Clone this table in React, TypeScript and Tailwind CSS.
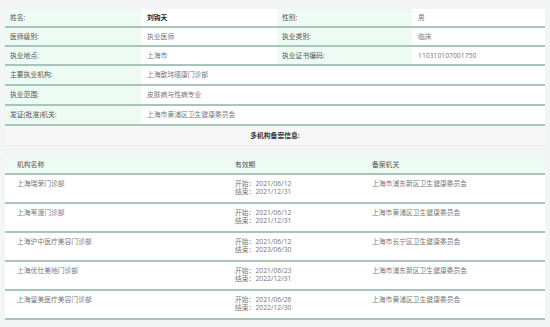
import React from "react";

const basic = [
  [
    { label: "姓名:", value: "刘钩天", bold: true },
    { label: "性别:", value: "男" },
  ],
  [
    { label: "医师级别:", value: "执业医师" },
    { label: "执业类别:", value: "临床" },
  ],
  [
    { label: "执业地点:", value: "上海市" },
    { label: "执业证书编码:", value: "110310107001750" },
  ],
];

const wide = [
  { label: "主要执业机构:", value: "上海歆玮德康门诊部" },
  { label: "执业范围:", value: "皮肤病与性病专业" },
  { label: "发证(批准)机关:", value: "上海市黄浦区卫生健康委员会" },
];

const orgs = [
  { name: "上海瑞荣门诊部", start: "2021/06/12", end: "2021/12/31", org: "上海市浦东新区卫生健康委员会" },
  { name: "上海苇渡门诊部", start: "2021/06/12", end: "2021/12/31", org: "上海市黄浦区卫生健康委员会" },
  { name: "上海沪中医疗美容门诊部", start: "2021/06/12", end: "2023/06/30", org: "上海市长宁区卫生健康委员会" },
  { name: "上海优仕美地门诊部", start: "2021/06/23", end: "2022/12/31", org: "上海市浦东新区卫生健康委员会" },
  { name: "上海留美医疗美容门诊部", start: "2021/06/26", end: "2022/12/30", org: "上海市黄浦区卫生健康委员会" },
];

const font = "font-['Open_Sans','Noto_Sans_CJK_SC',sans-serif]";

export default function App() {
  return (
    <div className={`h-[327px] w-[550px] overflow-hidden bg-[#f3f4f4] px-[5px] pt-[9px] text-[6.8px] leading-[8px] ${font}`}>
      {/* basic info */}
      <div className="flex flex-col">
        {basic.map((row, i) => (
          <div
            key={i}
            className="grid h-[19px] grid-cols-[136px_136px_135px_1fr] border-b-2 border-[#a9c5ba]"
          >
            {row.map((cell) => (
              <React.Fragment key={cell.label}>
                <div className="flex items-center bg-[#eefaf4] px-[5px] text-[#555]">{cell.label}</div>
                <div
                  className={`flex items-center bg-white px-[6px] ${
                    cell.bold ? "font-bold text-[#222]" : "text-[#777]"
                  }`}
                >
                  {cell.value}
                </div>
              </React.Fragment>
            ))}
          </div>
        ))}
        {wide.map((row) => (
          <div
            key={row.label}
            className="grid h-[20px] grid-cols-[136px_1fr] border-b-2 border-[#a9c5ba]"
          >
            <div className="flex items-center bg-[#eefaf4] px-[5px] text-[#555]">{row.label}</div>
            <div className="flex items-center bg-white px-[6px] text-[#777]">{row.value}</div>
          </div>
        ))}
      </div>

      {/* section title */}
      <div className="flex h-[20px] items-center justify-center border-b border-[#ececec] bg-[#f7f7f7] font-bold text-[#333]">
        多机构备案信息:
      </div>

      {/* org table */}
      <div className="mt-[10px] flex flex-col">
        <div className="grid h-[19px] grid-cols-[218px_137px_1fr] border-b-2 border-[#a9c5ba] bg-[#eefaf4] text-[#555]">
          <div className="flex items-center px-3">机构名称</div>
          <div className="flex items-center px-3">有效期</div>
          <div className="flex items-center px-3">备案机关</div>
        </div>
        {orgs.map((o) => (
          <div
            key={o.name}
            className="grid h-[29px] grid-cols-[218px_137px_1fr] border-b-2 border-[#a9c5ba] bg-white pt-[5px] text-[#777]"
          >
            <div className="px-3">{o.name}</div>
            <div className="px-3">
              <div>开始：{o.start}</div>
              <div>结束：{o.end}</div>
            </div>
            <div className="px-3">{o.org}</div>
          </div>
        ))}
      </div>
    </div>
  );
}
